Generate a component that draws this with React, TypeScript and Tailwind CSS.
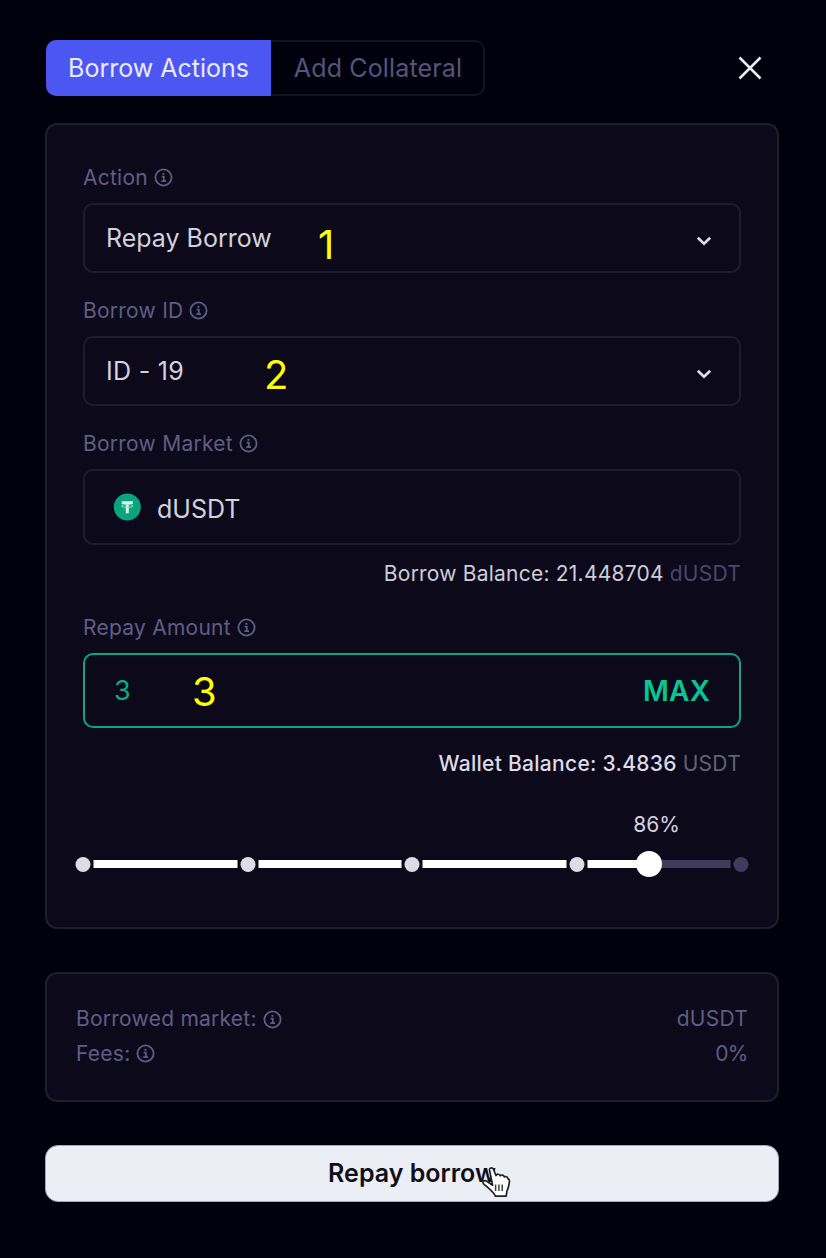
import React from "react";

function InfoIcon() {
  return (
    <svg width="19" height="19" viewBox="0 0 19 19" fill="none" stroke="currentColor" className="shrink-0">
      <circle cx="9.5" cy="9.5" r="8.1" strokeWidth="1.8" />
      <path d="M7.6 8.6H9.8V13M7.3 13.2H12" strokeWidth="1.7" />
      <circle cx="9.4" cy="5.8" r="1.1" fill="currentColor" stroke="none" />
    </svg>
  );
}

function Chevron() {
  return (
    <svg width="16" height="12" viewBox="0 0 16 12" fill="none" stroke="#e2e0ee" strokeWidth="2.6" className="mt-[6px]">
      <path d="M1.8 2.8L8 8.8L14.2 2.8" />
    </svg>
  );
}

function FieldLabel({ text, className }: { text: string; className: string }) {
  return (
    <div className={`flex h-6 items-center gap-[6px] text-[21px] text-[#605d85] ${className}`}>
      <span className="pt-[2px] tracking-[0.25px]">{text}</span>
      <InfoIcon />
    </div>
  );
}

function Step({ value, className }: { value: string; className: string }) {
  return (
    <span className={`absolute text-[40px] leading-10 text-[#ffff00] ${className}`}>{value}</span>
  );
}

function Select({ value, className, children }: { value: string; className: string; children: React.ReactNode }) {
  return (
    <div className="relative flex h-[70px] items-center justify-between rounded-[10px] border-2 border-[#1f1c2f] pr-[27px] pl-[21px]">
      <span className={`pt-[2px] text-[25px] text-[#d3d1de] ${className}`}>{value}</span>
      <Chevron />
      {children}
    </div>
  );
}

const MARKS = [0, 25, 50, 75, 100];
const VALUE = 86;

function Slider() {
  return (
    <div className="relative mt-[15px] h-[26px]">
      <div className="absolute top-[9px] h-2 w-full bg-[#3f3c5c]" />
      <div className="absolute top-[9px] h-2 bg-white" style={{ width: `${VALUE}%` }} />
      {MARKS.map((m) => (
        <div
          key={m}
          className="absolute top-[3px] flex h-5 w-[21px] -translate-x-1/2 items-center justify-center bg-[#0c091a]"
          style={{ left: `${m}%` }}
        >
          <div className={`size-[15px] rounded-full ${m > VALUE ? "bg-[#3f3c5c]" : "bg-[#dddbe6]"}`} />
        </div>
      ))}
      <div className="absolute top-0 size-[26px] -translate-x-1/2 rounded-full bg-white" style={{ left: `${VALUE}%` }} />
    </div>
  );
}

function Tether() {
  return (
    <svg width="28" height="28" viewBox="0 0 28 28" className="shrink-0">
      <circle cx="14.3" cy="14" r="13.5" fill="#0aa57f" />
      <path d="M8.8 8.2H19.8V11H15.8V20.2H12.8V11H8.8Z" fill="#d9f5ec" />
      <ellipse cx="14.3" cy="13" rx="5.8" ry="1.4" fill="none" stroke="#a5e3d0" strokeWidth="0.9" />
    </svg>
  );
}

function HandCursor() {
  return (
    <svg width="32" height="36" viewBox="0 0 32 36" className="absolute top-[18px] left-[434px]">
      <path
        d="M9.6 6.5C8.8 3.8 12.2 2.8 13.4 5.2L16 11.5C17 9.6 19.6 9.9 20.2 11.8C21.4 10.4 23.8 11 24.3 12.9C25.8 12 27.6 12.8 27.9 14.6C29.3 15 29.7 16.6 29.3 18.6C28.9 21.5 28.4 24.4 26.9 27.2L26.2 32.2H15.4C14.4 28.5 9 24.6 3.6 19.8C1.6 17.2 4.6 15.8 6.8 17.2L12.6 21.2Z"
        fill="#fff"
        stroke="#222"
        strokeWidth="1.7"
        strokeLinejoin="round"
      />
      <path d="M15.6 20.5V27M18.9 20.5V27M22.2 20.5V27" stroke="#444" strokeWidth="1.5" />
    </svg>
  );
}

export default function App() {
  return (
    <div className="h-[1258px] w-[826px] bg-[#01000d] pt-[39px] pr-[47px] pl-[45px] font-['Inter',sans-serif]">
      <div className="flex h-[57px] items-center justify-between pr-[16px]">
        <div className="flex h-[56px] w-[440px] pl-px text-[25px]">
          <button className="w-[225px] rounded-l-[10px] bg-[#4c57f1] pt-[2px] text-[#e9eaff]">Borrow Actions</button>
          <button className="flex-1 rounded-r-[10px] border-2 border-l-0 border-[#15131f] pt-[2px] pl-[2px] tracking-[0.15px] text-[#57547a]">
            Add Collateral
          </button>
        </div>
        <svg width="26" height="26" viewBox="0 0 26 26" fill="none" stroke="#ecebf3" strokeWidth="2.5" className="mt-[1px]">
          <path d="M2.5 2.5L23.5 23.5M23.5 2.5L2.5 23.5" />
        </svg>
      </div>

      <div className="mt-[27px] h-[806px] rounded-[12px] border-2 border-[#201e2d] bg-[#0c091a] px-9 pt-10">
        <FieldLabel text="Action" className="mb-[14px]" />
        <Select value="Repay Borrow" className="tracking-normal">
          <Step value="1" className="top-[20px] left-[233px]" />
        </Select>
        <FieldLabel text="Borrow ID" className="mt-[25px] mb-[14px]" />
        <Select value="ID - 19" className="tracking-[0.3px]">
          <Step value="2" className="top-[17px] left-[179px]" />
        </Select>
        <FieldLabel text="Borrow Market" className="mt-[25px] mb-[14px]" />
        <div className="flex h-[76px] items-center rounded-[10px] border-2 border-[#1f1c2f] pl-[28px]">
          <Tether />
          <span className="ml-[16px] pt-[5px] text-[25px] text-[#d3d1de]">dUSDT</span>
        </div>
        <div className="mt-4 flex h-6 items-center justify-end gap-[6px] pt-[2px] text-[21px] tracking-[0.22px]">
          <span className="text-[#cfcdda]">Borrow Balance: 21.448704</span>
          <span className="tracking-[0.25px] text-[#4a466c]">dUSDT</span>
        </div>
        <FieldLabel text="Repay Amount" className="mt-[30px] mb-[14px]" />
        <div className="relative flex h-[75px] items-center justify-between rounded-[10px] border-2 border-[#0ca583] px-[29px]">
          <span className="pt-[2px] text-[27px] text-[#0fa888]">3</span>
          <span className="text-[28px] font-semibold tracking-[0.2px] text-[#05c796]">MAX</span>
          <Step value="3" className="top-[17px] left-[107px]" />
        </div>
        <div className="mt-[23px] flex h-6 items-center justify-end gap-[6px] pt-[2px] text-[21px] tracking-[0.28px]">
          <span className="font-medium text-[#dddbe8]">Wallet Balance: 3.4836</span>
          <span className="text-[#646174]">USDT</span>
        </div>
        <div className="mt-[37px] flex h-6 items-center justify-end pt-[2px] pr-[61px] text-[21px] text-[#d6d4e0]">
          86%
        </div>
        <Slider />
      </div>

      <div className="mt-[43px] flex h-[130px] flex-col rounded-[12px] border-2 border-[#201e2d] bg-[#0c091a] px-[29px] pt-[28px] text-[21px] tracking-[0.25px] text-[#605d85]">
        <div className="flex h-[34px] items-center justify-between">
          <span className="flex items-center gap-[6px]">Borrowed market: <InfoIcon /></span>
          <span>dUSDT</span>
        </div>
        <div className="flex h-[34px] items-center justify-between pt-px">
          <span className="flex items-center gap-[6px]">Fees: <InfoIcon /></span>
          <span className="tracking-[-0.5px]">0%</span>
        </div>
      </div>

      <button className="relative mt-[43px] block h-[57px] w-full rounded-[13px] border border-[#a9a8b5] bg-[#eceef5] text-[25px] font-semibold text-[#0f0f18]">
        Repay borrow
        <HandCursor />
      </button>
    </div>
  );
}
